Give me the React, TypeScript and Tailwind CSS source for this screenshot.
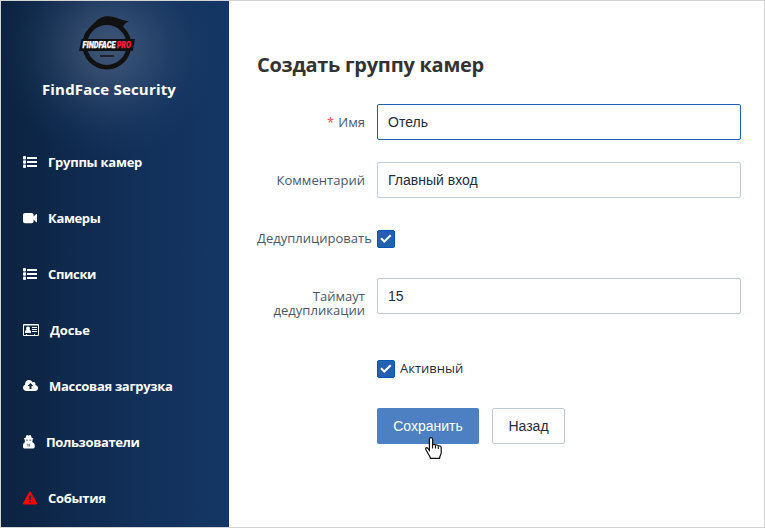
import React from 'react';

const ListIcon = () => (
  <svg width="14" height="14" viewBox="0 0 14 14" fill="currentColor">
    <rect x="0" y="1" width="3" height="3.500" rx="1" />
    <rect x="0" y="5.200" width="3" height="3.500" rx="1" />
    <rect x="0" y="9.400" width="3" height="3.500" rx="1" />
    <path d="M4 2h10v2H4zM4 6h10v2H4zM4 10h10v2H4z" />
  </svg>
);

const CameraIcon = () => (
  <svg width="14" height="14" viewBox="0 0 14 14" fill="currentColor">
    <path d="M2 2h6.600C9.700 2 10.600 2.900 10.600 4v1.600L13.200 3c.3-.3.8-.1.8.4v7.400c0 .5-.5.7-.8.4l-2.600-2.600v1.600c0 1.100-.9 2-2 2H2c-1.100 0-2-.9-2-2V4c0-1.100.9-2 2-2z" />
  </svg>
);

const CardIcon = () => (
  <svg width="16" height="14" viewBox="0 0 16 14" fill="currentColor">
    <path
      fillRule="evenodd"
      d="M1 1h14a1 1 0 0 1 1 1v10a1 1 0 0 1-1 1H1a1 1 0 0 1-1-1V2a1 1 0 0 1 1-1zM1 2.500V12h2v-1h1v1h7v-1h1v1h3V2.500z"
    />
    <circle cx="5" cy="5.500" r="2" />
    <path d="M2 10V8.800C2 7.500 2.900 7 3.800 7h2.400C7.200 7 8 7.600 8 8.800V10zM9 4h5v1H9zM9 6h5v1H9zM9 8h5v1H9z" />
  </svg>
);

const CloudIcon = () => (
  <svg width="15" height="14" viewBox="0 0 15 14" fill="currentColor">
    <path
      fillRule="evenodd"
      d="M3.500 12C1.500 12 0 10.600 0 8.700c0-1.300.8-2.500 2-3C2 3 3.700 1 6 1c1.700 0 3.100.9 3.700 2.400C11 2.600 12.500 3.500 12.500 5c0 .4-.1.700-.2 1C13.900 6.300 15 7.500 15 9c0 1.700-1.300 3-3 3zM7.500 4 4.700 7h1.800v3h2V7h1.800z"
    />
  </svg>
);

const AgentIcon = () => (
  <svg width="12" height="14" viewBox="0 0 12 14" fill="currentColor">
    <path
      fillRule="evenodd"
      d="M2.600 2.800 3.200.8C3.400 0 4.200 0 4.700.2c.5.3 1.300.3 1.800 0C7 0 7.800 0 8 .8l.6 2c1 .2 1.700.5 1.700.9 0 .4-.3.700-.8.9V6c0 .5-.1.800-.3 1.100C10.800 7.700 11.800 9.300 11.800 11.400 11.800 12.700 10.900 13.500 9.600 13.500H2C.7 13.500 0 12.700 0 11.400 0 9.300.6 7.700 2.200 7.100 2 6.800 1.800 6.500 1.800 6V4.600C1.200 4.400 1 4.100 1 3.700c0-.4.600-.7 1.600-.9zM3.100 4.700v.7h1.700v-.7zM6.500 4.700v.7h1.700v-.7zM4.200 8.800l.4.7v2h.7V9zM7.200 8.800 6.400 9v2.500h.6v-2z"
    />
  </svg>
);

const AlertIcon = () => (
  <svg width="14" height="14" viewBox="0 0 14 14" fill="#ff0000">
    <path
      fillRule="evenodd"
      d="M7 .4c.4 0 .7.200.9.500l6 11.200c.4.600-.1 1.400-.9 1.400H1c-.8 0-1.300-.8-.9-1.400l6-11.200c.2-.3.500-.5.900-.5zM6 4.700l.2 4.300h1.600L8 4.700zM6.200 10v1.600h1.600V10z"
    />
  </svg>
);

const Logo = () => (
  <svg width="58" height="57" viewBox="0 0 58 57" className="block">
    <circle cx="27.800" cy="31" r="22.200" fill="none" stroke="#111111" strokeWidth="4.600" />
    <path d="M5 24C7 17 11 13 15.500 8.500 20 4 24 2.300 29 2.300c7 0 12 3.700 21 5.200-3.500 1.300-5 2.500-6.500 6.500C38 10.500 33 9.800 27 10.300 19 11 12 16 9 24z" fill="#111111" />
    <path d="M2.500 25H56l-2.300 12H0z" fill="#111111" />
    <path d="M21 41h14v2H21z" fill="#241f26" />
    <g fontFamily="Roboto, sans-serif" fontSize="8.600" fontStyle="italic" fontWeight="900" strokeWidth="0.250">
      <text x="3.500" y="34" textLength="33" lengthAdjust="spacingAndGlyphs" fill="#ffffff" stroke="#ffffff">
        FINDFACE
      </text>
      <text x="37.800" y="34" textLength="14" lengthAdjust="spacingAndGlyphs" fill="#ff1a40" stroke="#ff1a40">
        PRO
      </text>
    </g>
  </svg>
);

const menu = [
  { label: 'Группы камер', icon: <ListIcon />, spacing: 'tracking-[-0.25px]' },
  { label: 'Камеры', icon: <CameraIcon />, spacing: 'tracking-[-0.35px]' },
  { label: 'Списки', icon: <ListIcon />, spacing: 'tracking-[-0.35px]' },
  { label: 'Досье', icon: <CardIcon />, spacing: 'tracking-[-0.1px]' },
  { label: 'Массовая загрузка', icon: <CloudIcon />, spacing: 'tracking-[-0.3px]' },
  { label: 'Пользователи', icon: <AgentIcon />, spacing: 'tracking-[-0.37px]' },
  { label: 'События', icon: <AlertIcon />, spacing: 'tracking-[-0.28px]' },
];

const inputBase =
  "block h-9 w-[364px] rounded-[2px] border bg-white px-2.5 font-['Liberation_Sans',Arial,sans-serif] text-[14px] text-[#1f2d3d] outline-none";

function Label({ children }: { children: React.ReactNode }) {
  return (
    <div className="w-[120px] shrink-0 pr-3 pt-[11px] text-right text-[13px] leading-[14px] tracking-[0.03px] text-[#48576a]">
      {children}
    </div>
  );
}

function Check() {
  return (
    <span className="flex size-[18px] shrink-0 items-center justify-center rounded-[2px] border border-[#0454be] bg-[#2360b0]">
      <svg width="12" height="10" viewBox="0 0 12 10" fill="none" stroke="#fff" strokeWidth="2">
        <path d="M1 4.200 4.300 7.500 10.700 1.200" />
      </svg>
    </span>
  );
}

export default function App() {
  return (
    <div className="flex h-[528px] w-[765px] overflow-hidden border border-[#d4d4d4] bg-white font-['Open_Sans','Noto_Sans',sans-serif]">
      <aside className="w-[228px] shrink-0 bg-[radial-gradient(circle_at_108px_48px,rgba(115,130,155,0.48)_0px,rgba(100,120,150,0.38)_30px,rgba(80,105,140,0.22)_60px,rgba(60,95,140,0.08)_86px,transparent_110px),linear-gradient(90deg,#0c2340_0%,#112f59_58%,#143763_100%)] text-white">
        <header className="flex h-[133px] flex-col items-center pr-[14px] pt-[13px]">
          <Logo />
          <h1 className="ml-[2px] mt-[7px] whitespace-nowrap text-[15px] font-bold leading-[22px] tracking-[0.18px]">FindFace Security</h1>
        </header>
        <nav>
          {menu.map((item) => (
            <a key={item.label} className="flex h-14 items-center gap-[11px] pl-[22px] text-[13px] font-bold">
              {item.icon}
              <span className={`pt-px ${item.spacing}`}>{item.label}</span>
            </a>
          ))}
        </nav>
      </aside>
      <main className="flex flex-col pl-7 pt-[48px]">
        <h2 className="h-[55px] whitespace-nowrap text-[20px] font-bold leading-[32px] tracking-[-0.26px] text-[#333333]">Создать группу камер</h2>
        <div className="flex h-[58px]">
          <Label>
            <span className="mr-1 text-[#ff4949]">*</span>Имя
          </Label>
          <input className={`${inputBase} border-[#2060b0]`} defaultValue="Отель" />
        </div>
        <div className="flex h-[58px]">
          <Label>Комментарий</Label>
          <input className={`${inputBase} border-[#bfcbd9]`} defaultValue="Главный вход" />
        </div>
        <div className="flex h-[58px]">
          <div className="w-[120px] shrink-0 whitespace-nowrap pt-[11px] text-[13px] leading-[14px] tracking-[0.02px] text-[#48576a]">
            Дедуплицировать
          </div>
          <div className="pt-[10px]">
            <Check />
          </div>
        </div>
        <div className="flex h-[82px]">
          <Label>Таймаут дедупликации</Label>
          <input className={`${inputBase} border-[#bfcbd9]`} defaultValue="15" />
        </div>
        <label className="ml-[120px] flex h-[48px] items-start gap-[5px] text-[13px] leading-[16px] text-[#1f2d3d]">
          <Check />
          <span>Активный</span>
        </label>
        <div className="ml-[120px] flex gap-[13px] font-['Liberation_Sans',Arial,sans-serif] text-[14px]">
          <button className="relative h-9 w-[102px] rounded-[2px] bg-[#4c80c3] text-white">
            Сохранить
            <svg className="absolute left-[47px] top-[29px]" width="19" height="23" viewBox="0 0 19 23">
              <path
                d="M7 .6c1 0 1.600.6 1.600 1.600v5.600c.6-.6 2.300-.6 2.900.500.6-.6 2.300-.4 2.800.7 1-.5 2.900 0 2.900 1.700v5c0 2.200-1.600 2.800-1.600 5.700H6.400c0-1.700-1.300-2.800-2.200-4.600L1.800 12.500c-.7-1.500 1-2.400 2-1.100l1.600 1.900V2.200C5.400 1.200 6 .6 7 .6z"
                fill="#fff"
                stroke="#111"
                strokeWidth="1.200"
              />
              <path d="M8.600 7.800V11.500M11.500 8.500v3M14.300 9.500v2.500" stroke="#111" strokeWidth="1.100" />
            </svg>
          </button>
          <button className="h-9 w-[73px] rounded-[2px] border border-[#bfcbd9] bg-white text-[#1f2d3d]">Назад</button>
        </div>
      </main>
    </div>
  );
}
